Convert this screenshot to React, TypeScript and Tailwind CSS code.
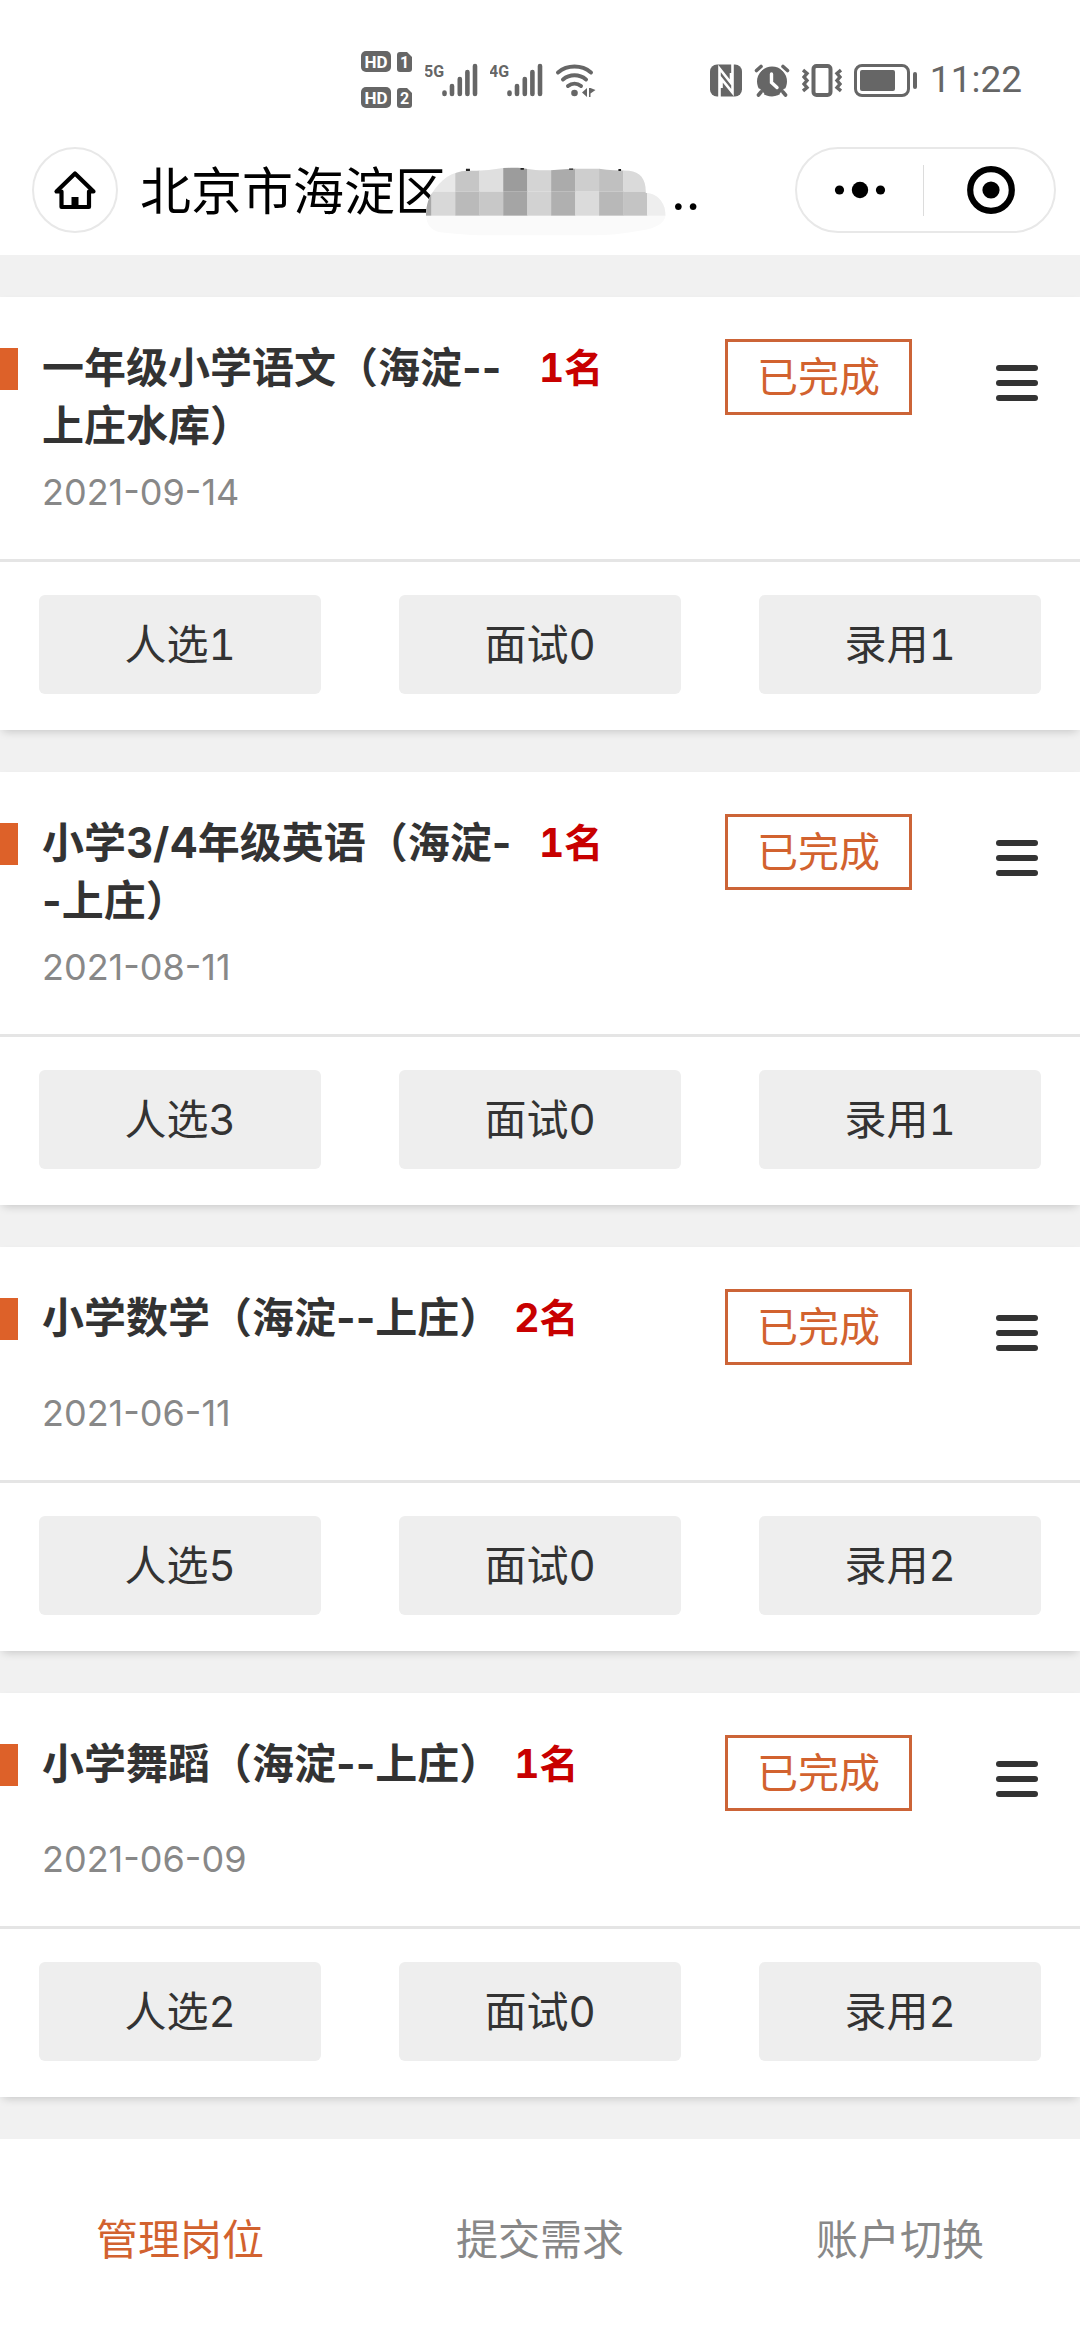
import React from 'react';

interface Job {
  title: string;
  count: number;
  date: string;
  picked: number;
  interviewed: number;
  hired: number;
}

const jobs: Job[] = [
  { title: '一年级小学语文（海淀--上庄水库）', count: 1, date: '2021-09-14', picked: 1, interviewed: 0, hired: 1 },
  { title: '小学3/4年级英语（海淀--上庄）', count: 1, date: '2021-08-11', picked: 3, interviewed: 0, hired: 1 },
  { title: '小学数学（海淀--上庄）', count: 2, date: '2021-06-11', picked: 5, interviewed: 0, hired: 2 },
  { title: '小学舞蹈（海淀--上庄）', count: 1, date: '2021-06-09', picked: 2, interviewed: 0, hired: 2 },
];

const tabs = ['管理岗位', '提交需求', '账户切换'];

const SimTag: React.FC<{ slot: number }> = ({ slot }) => (
  <svg width="52" height="22" viewBox="0 0 52 22" fontFamily="Roboto, sans-serif" fontWeight="700" textAnchor="middle">
    <rect x="0" y="0" width="30" height="21" rx="5" fill="#666" />
    <text x="15" y="16.5" fontSize="17" fill="#fff">HD</text>
    <path d="M39 1h7l5 5v12a3 3 0 0 1-3 3h-9a3 3 0 0 1-3-3V4a3 3 0 0 1 3-3z" fill="#666" />
    <text x="43.5" y="17" fontSize="16" fill="#fff">{slot}</text>
  </svg>
);

const Signal: React.FC<{ label: string }> = ({ label }) => (
  <svg width="53" height="34" viewBox="0 0 53 34">
    <text x="-1" y="14" fontSize="16" fontWeight="700" fontFamily="Roboto, sans-serif" fill="#666">{label}</text>
    <g stroke="#666" strokeWidth="4.6" strokeLinecap="round">
      <path d="M19.5 29.5v1.5M27 23v8M34.8 16v15M42.4 9v22M50 3v28" />
    </g>
  </svg>
);

const Wifi = () => (
  <svg width="42" height="34" viewBox="0 0 42 34" fill="none" stroke="#666" strokeWidth="4" strokeLinecap="round">
    <path d="M3 9.5a26 26 0 0 1 33 0M8 16.5a18 18 0 0 1 23 0M13 23a10.5 10.5 0 0 1 13 0" />
    <circle cx="19.5" cy="30" r="3.3" fill="#666" stroke="none" />
    <path d="M32 25v9l-5-4.5zM34 25v9h1.500v-3.500l5-3.500-5-2z" fill="#666" stroke="none" />
  </svg>
);

const Nfc = () => (
  <svg width="32" height="33" viewBox="0 0 32 33">
    <rect y="0.5" width="32" height="32" rx="7" fill="#666" />
    <path d="M9.5 33V4.500L21 19V9M22.500 0v28.500L11.500 15v9" fill="none" stroke="#fff" strokeWidth="2.6" />
  </svg>
);

const Alarm = () => (
  <svg width="36" height="33" viewBox="0 0 36 33" strokeLinecap="round" fill="none">
    <circle cx="18" cy="17.5" r="15" fill="#666" />
    <path d="M2.5 6.500l4.500-4M33.500 6.500l-4.500-4M7 28l-2.500 3M29 28l2.500 3" stroke="#fff" strokeWidth="7" />
    <circle cx="18" cy="17.5" r="14" fill="#666" />
    <path d="M2.5 6.500l4.500-4M33.500 6.500l-4.500-4M7 28l-2.500 3M29 28l2.500 3" stroke="#666" strokeWidth="3.6" />
    <path d="M17.5 10v8.500l5.500 5" stroke="#fff" strokeWidth="3.4" />
  </svg>
);

const Vibrate = () => (
  <svg width="40" height="33" viewBox="0 0 40 33" fill="none" stroke="#666">
    <rect x="11.5" y="2" width="17" height="29" rx="3" strokeWidth="4" />
    <path d="M1 6l4 3.500-3 3.500 3 3.500-3 3.500 3 3.500-4 3.500M39 6l-4 3.500 3 3.500-3 3.500 3 3.500-3 3.500 4 3.500" strokeWidth="3.4" />
  </svg>
);

const Battery = () => (
  <svg width="64" height="33" viewBox="0 0 64 33">
    <rect x="1.5" y="1.5" width="53" height="30" rx="6.5" fill="none" stroke="#666" strokeWidth="3" />
    <rect x="6" y="6" width="35" height="21" rx="2" fill="#666" />
    <rect x="59" y="8" width="4" height="17" rx="2" fill="#666" />
  </svg>
);

const StatusBar = () => (
  <div className="flex h-[125px] items-center justify-between pt-[35px] pr-[58px] pl-[361px]">
    <div className="flex items-center gap-3">
      <div className="flex flex-col gap-[14px]">
        <SimTag slot={1} />
        <SimTag slot={2} />
      </div>
      <Signal label="5G" />
      <Signal label="4G" />
      <Wifi />
    </div>
    <div className="flex items-center gap-3">
      <Nfc />
      <Alarm />
      <Vibrate />
      <Battery />
      <span className="font-[Roboto,sans-serif] text-[37px] leading-[44px] text-[#666]">11:22</span>
    </div>
  </div>
);

const mosaicTop = ['#e8e8e8', '#c6c6c6', '#dfdfdf', '#9c9c9c', '#d4d4d4', '#ababab', '#cecece', '#c0c0c0', '#dadada', '#eeeeee'];
const mosaicMiddle = ['#d8d8d8', '#bababa', '#c8c8c8', '#a5a5a5', '#d2d2d2', '#b0b0b0', '#dbdbdb', '#b8b8b8', '#c4c4c4', '#eeeeee'];

// Pixelated patch that hides the middle of the organisation name
const Mosaic = () => (
  <svg className="relative mt-5 -ml-5 shrink-0" width="241" height="70" viewBox="80 112 724 210" aria-hidden="true">
    <clipPath id="mosaic">
      <path d="M80 258C80 225 90 200 100 188C125 150 155 125 205 123C250 124 280 120 312 115C340 112 370 113 385 118C430 126 470 120 520 117H600C630 122 660 122 690 123C725 127 742 150 740 190C775 190 800 220 800 258C795 280 775 292 740 300C680 312 620 318 560 318H240C180 312 130 312 110 304C90 295 82 280 80 258Z" />
    </clipPath>
    <g clipPath="url(#mosaic)">
      <rect x="80" y="112" width="724" height="210" fill="#fafafa" />
      {mosaicTop.map((fill, i) => (
        <rect key={i} x={96 + i * 72} y="112" width="73" height="74" fill={fill} />
      ))}
      {mosaicMiddle.map((fill, i) => (
        <rect key={i} x={96 + i * 72} y="186" width="73" height="72" fill={fill} />
      ))}
      <rect x="80" y="186" width="16" height="72" fill="#a8a8a8" />
    </g>
    <path d="M200 117h12v7h-12zM364 115h10v5h-10zM510 116h12v4h-12zM658 118h8v6h-8z" fill="#222" />
  </svg>
);

const NavBar = () => (
  <header className="flex h-[130px] items-center pr-6 pl-8">
    <button aria-label="首页" className="flex size-[86px] shrink-0 items-center justify-center rounded-full border-2 border-[#e8e8e8]">
      <svg width="44" height="40" viewBox="0 0 44 40">
        <path d="M22 3.5L3.5 21.500H8.500V37H36V21.500H40.500Z" fill="none" stroke="#000" strokeWidth="4.2" strokeLinejoin="round" />
        <rect x="18.5" y="27" width="7" height="11" fill="#000" />
      </svg>
    </button>
    <h1 className="ml-[22px] flex items-center pt-1 text-[51px] leading-[60px] whitespace-nowrap text-black">
      北京市海淀区
      <Mosaic />
      <span className="ml-1">..</span>
    </h1>
    <div className="ml-auto flex h-[86px] w-[261px] shrink-0 items-center rounded-full border-2 border-[#e8e8e8]">
      <button aria-label="更多" className="flex h-full flex-1 items-center justify-center">
        <svg width="52" height="18" viewBox="0 0 52 18">
          <circle cx="5.5" cy="9" r="4.6" />
          <circle cx="26" cy="9" r="8.2" />
          <circle cx="46.5" cy="9" r="4.6" />
        </svg>
      </button>
      <div className="h-[51px] w-px bg-[#dcdcdc]" />
      <button aria-label="关闭" className="flex h-full flex-1 items-center justify-center pl-1">
        <svg width="48" height="48" viewBox="0 0 48 48">
          <circle cx="24" cy="24" r="20.8" fill="none" stroke="#000" strokeWidth="6.2" />
          <circle cx="24" cy="24" r="8.6" />
        </svg>
      </button>
    </div>
  </header>
);

const JobCard: React.FC<{ job: Job }> = ({ job }) => {
  const stats = [`人选${job.picked}`, `面试${job.interviewed}`, `录用${job.hired}`];

  return (
    <article className="bg-white shadow-[0_4px_9px_-3px_rgba(0,0,0,0.2)]">
      <div className="flex items-start border-b-[3px] border-[#e5e5e5] pt-[42px] pr-[42px] pb-[42px]">
        <div className="mt-[9px] h-[42px] w-[18px] shrink-0 bg-[#dd6129]" />
        <div className="ml-6 min-w-0 flex-1">
          <div className="flex min-h-[87px] items-start gap-[13px]">
            <h2 className="max-w-[484px] text-[42px] leading-[58px] font-bold text-[#333] [line-break:anywhere]">{job.title}</h2>
            <span className="shrink-0 text-[39px] leading-[58px] font-bold text-[#c80000] tabular-nums">{job.count}名</span>
          </div>
          <p className="mt-3 text-[36px] leading-[50px] text-[#888]">{job.date}</p>
        </div>
        <span className="shrink-0 border-[3px] border-[#cc6437] px-[29px] text-[41px] leading-[70px] text-[#d2622f]">已完成</span>
        <button aria-label="菜单" className="mt-[26px] ml-[84px] flex w-[42px] shrink-0 flex-col gap-[9px]">
          <span className="h-[6px] w-full rounded-full bg-[#333]" />
          <span className="h-[6px] w-full rounded-full bg-[#333]" />
          <span className="h-[6px] w-full rounded-full bg-[#333]" />
        </button>
      </div>
      <div className="grid grid-cols-3 gap-[78px] px-[39px] pt-[33px] pb-9">
        {stats.map((label) => (
          <button key={label} className="h-[99px] rounded-md bg-[#eee] text-[42px] text-[#333] tabular-nums">{label}</button>
        ))}
      </div>
    </article>
  );
};

export default function App() {
  return (
    <div className="flex min-h-screen flex-col bg-[#f1f1f1] font-[Inter,'Noto_Sans_CJK_SC',sans-serif]" lang="zh-CN">
      <div className="bg-white">
        <StatusBar />
        <NavBar />
      </div>
      <main className="flex flex-col gap-[42px] py-[42px]">
        {jobs.map((job) => (
          <JobCard key={job.title} job={job} />
        ))}
      </main>
      <nav className="grid flex-1 grid-cols-3 bg-white">
        {tabs.map((tab, i) => (
          <button key={tab} className={`min-h-[160px] text-[42px] ${i === 0 ? 'text-[#d2622f]' : 'text-[#888]'}`}>
            {tab}
          </button>
        ))}
      </nav>
    </div>
  );
}
